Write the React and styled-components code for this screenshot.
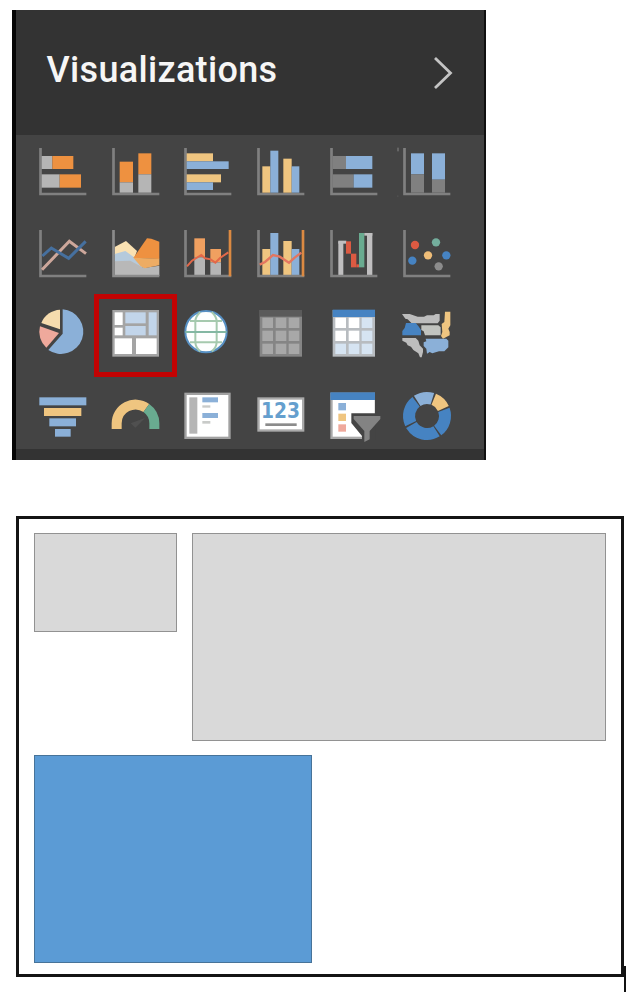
import React from "react";
import styled, { createGlobalStyle } from "styled-components";

const GlobalStyle = createGlobalStyle`
  * { box-sizing: border-box; }
  body { margin: 0; background: #fff; overflow: hidden; }
`;

const ORANGE = "#ee9140";
const YELLOW = "#efc580";
const BLUE = "#8bb0d8";
const DEEP = "#4683c2";
const LIGHT = "#b5b5b5";
const GRAY = "#808080";
const RED = "#dc5a42";
const GREEN = "#69ab90";
const PINK = "#efa99c";

const Page = styled.main`
  width: 641px;
  height: 992px;
  padding: 10px 0 0 12px;
  background: #fff;
  font-family: Roboto, "Open Sans", sans-serif;
`;

const Panel = styled.section`
  display: flex;
  flex-direction: column;
  width: 474px;
  height: 450px;
  background: #333;
  border-left: 4px solid #060606;
  border-right: 2px solid #101010;
`;

const PanelHeader = styled.header`
  display: flex;
  align-items: center;
  justify-content: space-between;
  height: 125px;
  padding: 0 29px 7px 30.5px;
`;

const Title = styled.h1`
  margin: 2px 0 0;
  color: #f6f6f6;
  font-size: 36px;
  font-weight: 500;
  line-height: 44px;
  letter-spacing: 0.32px;
`;

const Chevron = styled.svg`
  display: block;
  width: 22px;
  height: 34px;
  margin-top: 7px;
`;

const IconGrid = styled.div`
  display: grid;
  grid-template-columns: repeat(6, 72.93px);
  grid-template-rows: 81.8px 80.6px 81.4px 48px;
  height: 314px;
  padding: 13px 0 0 22.6px;
  background: #444;
`;

const Cell = styled.div`
  position: relative;
  width: 48px;
  height: 48px;
`;

const SelectionFrame = styled.span`
  position: absolute;
  left: -18px;
  top: -16.6px;
  width: 83px;
  height: 83px;
  border: 5px solid #c20303;
`;

const Glyph = styled.svg`
  display: block;
  width: 48px;
  height: 48px;
  overflow: visible;
`;

const Canvas = styled.section`
  position: relative;
  display: grid;
  grid-template-columns: 143px 414px;
  grid-template-rows: 208px 208px;
  column-gap: 15px;
  row-gap: 14px;
  width: 608px;
  height: 461px;
  margin: 56px 0 0 4px;
  padding: 14px 15px;
  border: 3px solid #141414;
`;

const Tile = styled.div`
  grid-column: ${(p) => (p.$wide ? "1 / -1" : "auto")};
  width: ${(p) => p.$width};
  height: ${(p) => p.$height}px;
  background: ${(p) => p.$fill};
  border: 1.5px solid ${(p) => p.$line};
`;

const Cursor = styled.span`
  position: absolute;
  left: 605px;
  top: 447px;
  width: 2px;
  height: 29px;
  background: #111;
`;

/* Rectangle given by its left, top, right and bottom edges. */
const R = ({ b, c }) => (
  <rect x={b[0]} y={b[1]} width={b[2] - b[0]} height={b[3] - b[1]} fill={c} />
);

const Bars = ({ items }) => items.map(([c, ...b], i) => <R key={i} b={b} c={c} />);

const Axis = () => <path d="M4.5 0V138H142" fill="none" stroke={GRAY} strokeWidth="8" />;

const TableCells = ({ colors }) =>
  colors.map((c, i) => {
    const x = [16, 56, 95][i % 3];
    const y = [23, 62, 101][Math.floor(i / 3)];
    return <rect key={i} x={x} y={y} width="32" height="31" fill={c} />;
  });

const Ring = ({ from, to, color }) => (
  <circle
    cx="72" cy="72" r="54" fill="none" stroke={color} strokeWidth="36"
    pathLength="360" strokeDasharray={`${to - from} 360`}
    transform={`rotate(${from - 90} 72 72)`}
  />
);

const W = "#fff";
const PALE = "#d6e4f2";

const icons = [
  ["Stacked bar chart", <><Axis /><Bars items={[[LIGHT, 8, 24, 40, 63], [ORANGE, 40, 24, 103, 63], [LIGHT, 8, 79, 62, 119], [ORANGE, 62, 79, 126, 119]]} /></>],
  ["Stacked column chart", <><Axis /><Bars items={[[ORANGE, 23, 41, 63, 103], [LIGHT, 23, 103, 63, 134], [ORANGE, 79, 16, 118, 79], [LIGHT, 79, 79, 118, 134]]} /></>],
  ["Clustered bar chart", <><Axis /><Bars items={[[YELLOW, 8, 16, 87, 40], [BLUE, 8, 40, 134, 63], [YELLOW, 8, 79, 111, 103], [BLUE, 8, 103, 87, 126]]} /></>],
  ["Clustered column chart", <><Axis /><Bars items={[[YELLOW, 16, 55, 40, 134], [BLUE, 40, 8, 64, 134], [YELLOW, 79, 32, 104, 134], [BLUE, 104, 55, 127, 134]]} /></>],
  ["100% stacked bar chart", <><Axis /><Bars items={[[GRAY, 8, 24, 48, 63], [BLUE, 48, 24, 127, 63], [GRAY, 8, 79, 71, 119], [BLUE, 71, 79, 127, 119]]} /></>],
  ["100% stacked column chart", <><Axis /><Bars items={[["#777", -17, -1, -13, 10], ["#555", -17, 142, -14, 147], [BLUE, 24, 16, 63, 79], [GRAY, 24, 79, 63, 134], [BLUE, 87, 16, 126, 95], [GRAY, 87, 95, 126, 134]]} /></>],

  ["Line chart", <><Axis /><g fill="none" strokeWidth="9"><path d="M9 119L91 34L141 71" stroke="#cda79b" /><path d="M10 78L37 54L89 85L140 34" stroke="#46709f" /></g></>],
  ["Area chart", <>
    <path d="M8 51L42 33L75 63L67 84L8 75Z" fill="#fae1b2" />
    <path d="M8 72L40 63L68 83L100 115L8 95Z" fill="#b5cadc" />
    <path d="M8 94L55 92L95 114L142 107V138H8Z" fill="#b8b8b8" />
    <path d="M64 84L105 25L118 26L142 35V87L64 84Z" fill={ORANGE} />
    <path d="M64 83L142 86V106L98 115L86 109Z" fill="#edac64" />
    <path d="M4.5 0V138H142" fill="none" stroke="#8b8b8b" strokeWidth="8" />
  </>],
  ["Line and stacked column chart", <><Bars items={[["#f0a060", 31, 25, 63, 82], [LIGHT, 31, 82, 63, 136], ["#f0a060", 79, 57, 111, 97], [LIGHT, 79, 97, 111, 136]]} /><Axis /><path d="M138 0V139" stroke="#dc8a42" strokeWidth="8" /><path d="M9 109L24 92L52 75L63 85L80 88L94 98L108 84L133 67" fill="none" stroke="#e36849" strokeWidth="6" /></>],
  ["Line and clustered column chart", <><Bars items={[[YELLOW, 16, 57, 40, 136], [BLUE, 40, 9, 64, 136], [YELLOW, 79, 33, 104, 136], [BLUE, 104, 57, 127, 136]]} /><Axis /><path d="M138 0V139" stroke="#dc8a42" strokeWidth="8" /><path d="M8 104L24 96L48 75L68 80L96 98L114 82L133 68" fill="none" stroke="#e37660" strokeWidth="7" /></>],
  ["Waterfall chart", <><Bars items={[["#c0bfc0", 25, 34, 40, 136], ["#c0bfc0", 25, 32, 49, 41], [RED, 48, 34, 63, 71], [RED, 63, 71, 79, 112], [RED, 79, 103, 87, 112], [GREEN, 87, 9, 103, 112], ["#c0bfc0", 103, 9, 127, 17], ["#c0bfc0", 111, 9, 127, 136]]} /><Axis /></>],
  ["Scatter chart", <><Axis />{[[36, 45, RED], [99, 37, "#74ae9d"], [75, 76, "#efbd78"], [130, 76, DEEP], [28, 92, DEEP], [107, 109, "#8c8c8c"]].map(([x, y, c]) => <circle key={x} cx={x} cy={y} r="12.5" fill={c} />)}</>],

  ["Pie chart", <>
    <path d="M71 -2A67 67 0 1 1 28 120L71 71Z" fill={BLUE} />
    <path d="M63 -1V58L7 39A64 64 0 0 1 63 -1Z" fill="#f6dcae" />
    <path d="M3 49L60 69L22 113A64 64 0 0 1 3 49Z" fill={PINK} />
  </>],
  ["Treemap", <Bars items={[["#a4a4a4", 1, 0, 141, 140], [W, 8, 7, 32, 45], [W, 8, 53, 32, 76], ["#c2d5ea", 40, 7, 101, 40], ["#c2d5ea", 40, 48, 101, 76], ["#c2d5ea", 110, 7, 134, 76], [W, 8, 85, 60, 132], [W, 72, 85, 134, 132]]} />],
  ["Map", <>
    <circle cx="66" cy="65" r="62" fill="#fdfefe" stroke="#5790c3" strokeWidth="6" />
    <g fill="none" stroke="#a5c9ae" strokeWidth="6">
      <path d="M18 33H114M18 97H114M49 6Q34 20 34 34V97Q35 114 49 124M83 6Q98 20 98 34V97Q97 114 83 124" />
      <path d="M4 66H128" stroke="#83b7a3" />
    </g>
  </>],
  ["Table", <><Bars items={[["#858585", 8, 0, 135, 140], ["#5b5b5b", 8, 0, 135, 20]]} /><TableCells colors={Array(9).fill("#a8a8a8")} /></>],
  ["Matrix", <><Bars items={[["#b8bcc0", 8, 0, 135, 140], [DEEP, 8, -1, 135, 21]]} /><TableCells colors={[W, W, PALE, W, W, PALE, PALE, PALE, PALE]} /></>],
  ["Filled map", <>
    <path d="M-3 12H20L44 20H63L72 16H92L98 12H110V32L104 40H26L14 28L7 26Z" fill="#bdbdbd" />
    <path d="M9 39H38L46 48L54 60V76H-2V63L5 54Z" fill={DEEP} />
    <path d="M55 46H106L113 52V76H66L62 64L55 60Z" fill="#c1c3bf" />
    <path d="M126 5H142V46L136 56L140 66V76L120 86L114 78L118 66L116 42L124 36Z" fill={YELLOW} />
    <path d="M-2 84H38L46 92L50 106L60 116V126L56 142H51L46 130L31 120L24 110L14 106L10 98L-2 92Z" fill="#bdbdbd" />
    <path d="M68 86H130L136 92V112L124 124L108 124L88 130L80 126L72 131L70 116L62 108V97L70 94Z" fill={BLUE} />
  </>],

  ["Funnel", <Bars items={[[BLUE, 1, 16, 142, 40], [YELLOW, 15, 48, 127, 72], [BLUE, 31, 79, 111, 103], [BLUE, 48, 111, 95, 134]]} />],
  ["Gauge", <>
    <g fill="none" strokeWidth="30">
      <path d="M14 111V94A56.500 56.500 0 0 1 103 48" stroke={YELLOW} />
      <path d="M103 48Q127 65 127 94V111" stroke={GREEN} />
    </g>
    <path d="M56 94L99 78L70 107Z" fill="#505050" />
  </>],
  ["Multi-row card", <Bars items={[["#a1a1a1", 1, 2, 140, 141], [W, 8, 9, 133, 134], ["#b5b5b5", 16, 16, 40, 125], [BLUE, 55, 16, 102, 31], ["#c9cbc9", 55, 40, 79, 47], [BLUE, 55, 63, 102, 78], ["#c9cbc9", 55, 87, 79, 95]]} />],
  ["Card", <>
    <Bars items={[["#aaa", 1, 16, 142, 119], [W, 8, 23, 135, 112], ["#8b8b8b", 25, 94, 119, 102]]} />
    <text x="12" y="78" textLength="117" lengthAdjust="spacingAndGlyphs" fill="#659fce" fontFamily="DejaVu Sans, sans-serif" fontWeight="700" fontSize="62">123</text>
  </>],
  ["Slicer", <>
    <Bars items={[["#a9a9a9", 1, 2, 135, 141], [W, 8, 24, 134, 134], [DEEP, 1, 1, 135, 24], [BLUE, 25, 33, 48, 55], [YELLOW, 25, 65, 48, 87], [PINK, 25, 97, 48, 119]]} />
    <path d="M64 64H136V142H96V132L64 93Z" fill="#444" />
    <path d="M71 72H151V81L119 117V142L103 150V117L71 81Z" fill="#838383" />
  </>],
  ["Donut chart", <>
    <Ring from={-33} to={17} color={BLUE} />
    <Ring from={22} to={65} color={YELLOW} />
    <Ring from={70} to={143} color={DEEP} />
    <Ring from={148} to={240} color={DEEP} />
    <Ring from={245} to={322} color={DEEP} />
  </>],
];

const VisualIcon = ({ name, selected, children }) => (
  <Cell>
    <Glyph viewBox="0 0 144 144" role="img" aria-label={name}>{children}</Glyph>
    {selected && <SelectionFrame />}
  </Cell>
);

export default function App() {
  return (
    <Page>
      <GlobalStyle />
      <Panel>
        <PanelHeader>
          <Title>Visualizations</Title>
          <Chevron viewBox="0 0 22 34" aria-hidden="true">
            <path d="M2 2L17.500 17L2 32" fill="none" stroke="#c4c4c4" strokeWidth="2.800" />
          </Chevron>
        </PanelHeader>
        <IconGrid>
          {icons.map(([name, art]) => (
            <VisualIcon key={name} name={name} selected={name === "Treemap"}>{art}</VisualIcon>
          ))}
        </IconGrid>
      </Panel>
      <Canvas>
        <Tile $width="100%" $height={99} $fill="#d9d9d9" $line="#929292" />
        <Tile $width="100%" $height={208} $fill="#d9d9d9" $line="#929292" />
        <Tile $wide $width="278px" $height={208} $fill="#5b9bd5" $line="#477399" />
        <Cursor />
      </Canvas>
    </Page>
  );
}
